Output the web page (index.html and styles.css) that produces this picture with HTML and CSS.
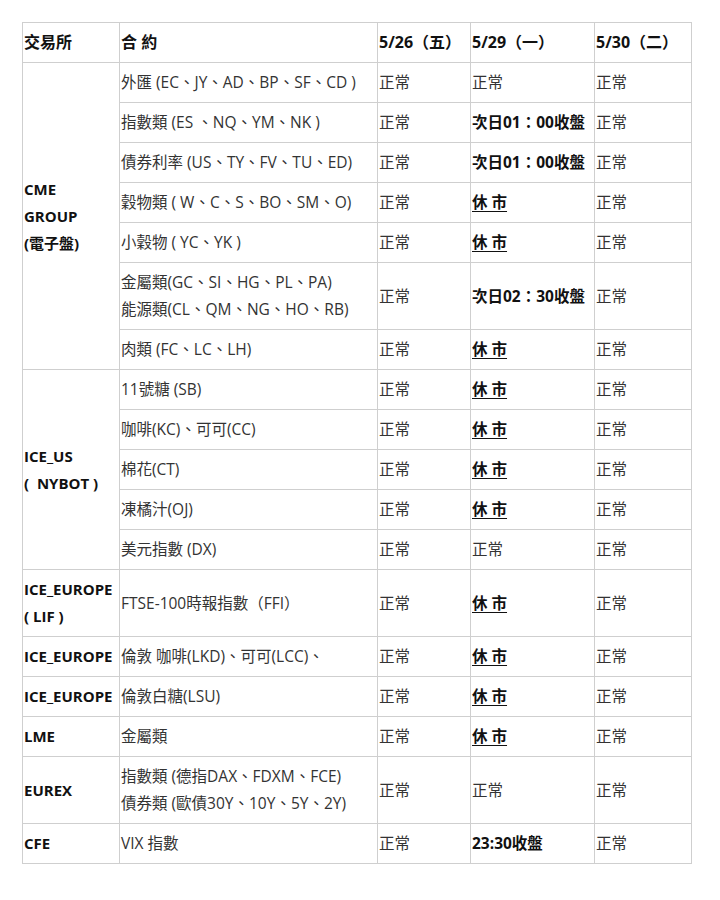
FILE: index.html
```html
<!DOCTYPE html>
<html lang="zh-Hant">
<head>
<meta charset="utf-8">
<title>交易所休市表</title>
<link rel="stylesheet" href="styles.css">
</head>
<body>
<div class="wrap">
<table class="sched">
<colgroup>
<col class="c1"><col class="c2"><col class="c3"><col class="c4"><col class="c5">
</colgroup>
<thead>
<tr><th>交易所</th><th>合 約</th><th>5/26（五）</th><th>5/29（一）</th><th>5/30（二）</th></tr>
</thead>
<tbody>
<tr><td rowspan="7" class="ex">CME<br>GROUP<br>(電子盤)</td><td>外匯 (EC、JY、AD、BP、SF、CD )</td><td>正常</td><td>正常</td><td>正常</td></tr>
<tr><td>指數類 (ES 、NQ、YM、NK )</td><td>正常</td><td class="b">次日01：00收盤</td><td>正常</td></tr>
<tr><td>債券利率 (US、TY、FV、TU、ED)</td><td>正常</td><td class="b">次日01：00收盤</td><td>正常</td></tr>
<tr><td>穀物類 ( W、C、S、BO、SM、O)</td><td>正常</td><td class="b"><u>休 市</u></td><td>正常</td></tr>
<tr><td>小穀物 ( YC、YK )</td><td>正常</td><td class="b"><u>休 市</u></td><td>正常</td></tr>
<tr><td>金屬類(GC、SI、HG、PL、PA)<br>能源類(CL、QM、NG、HO、RB)</td><td>正常</td><td class="b">次日02：30收盤</td><td>正常</td></tr>
<tr><td>肉類 (FC、LC、LH)</td><td>正常</td><td class="b"><u>休 市</u></td><td>正常</td></tr>
<tr><td rowspan="5" class="ex">ICE_US<br>(&nbsp; NYBOT )</td><td>11號糖 (SB)</td><td>正常</td><td class="b"><u>休 市</u></td><td>正常</td></tr>
<tr><td>咖啡(KC)、可可(CC)</td><td>正常</td><td class="b"><u>休 市</u></td><td>正常</td></tr>
<tr><td>棉花(CT)</td><td>正常</td><td class="b"><u>休 市</u></td><td>正常</td></tr>
<tr><td>凍橘汁(OJ)</td><td>正常</td><td class="b"><u>休 市</u></td><td>正常</td></tr>
<tr><td>美元指數 (DX)</td><td>正常</td><td>正常</td><td>正常</td></tr>
<tr><td class="ex">ICE_EUROPE<br>( LIF )</td><td>FTSE-100時報指數（FFI）</td><td>正常</td><td class="b"><u>休 市</u></td><td>正常</td></tr>
<tr><td class="ex">ICE_EUROPE</td><td>倫敦 咖啡(LKD)、可可(LCC)、</td><td>正常</td><td class="b"><u>休 市</u></td><td>正常</td></tr>
<tr><td class="ex">ICE_EUROPE</td><td>倫敦白糖(LSU)</td><td>正常</td><td class="b"><u>休 市</u></td><td>正常</td></tr>
<tr><td class="ex">LME</td><td>金屬類</td><td>正常</td><td class="b"><u>休 市</u></td><td>正常</td></tr>
<tr><td class="ex">EUREX</td><td>指數類 (德指DAX、FDXM、FCE)<br>債券類 (歐債30Y、10Y、5Y、2Y)</td><td>正常</td><td>正常</td><td>正常</td></tr>
<tr><td class="ex">CFE</td><td>VIX 指數</td><td>正常</td><td class="b">23:30收盤</td><td>正常</td></tr>
</tbody>
</table>
</div>
</body>
</html>
```
FILE: styles.css
```css
html, body {
  margin: 0;
  padding: 0;
  background: #fff;
}
.wrap {
  padding: 22px 0 0 22px;
}
.sched {
  border-collapse: collapse;
  table-layout: fixed;
  width: 669px;
  font-family: "Open Sans", "Noto Sans CJK TC", sans-serif;
  font-size: 15.5px;
  line-height: 27px;
  color: #333;
}
.c1 { width: 97px; }
.c2 { width: 258px; }
.c3 { width: 93px; }
.c4 { width: 124px; }
.c5 { width: 97px; }
.sched th,
.sched td {
  border: 1px solid #cfcfcf;
  padding: 6px 1px;
  text-align: left;
  vertical-align: middle;
  white-space: nowrap;
  overflow: visible;
}
.sched th {
  font-weight: 700;
  color: #111;
  font-size: 16px;
}
.sched td.ex,
.sched td.b {
  font-weight: 700;
  color: #111;
}
.sched td.ex {
  font-size: 15px;
}
.sched u {
  text-decoration: underline;
  text-underline-offset: 3px;
}
```
